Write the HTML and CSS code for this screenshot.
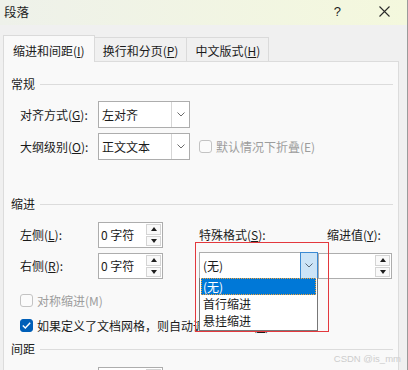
FILE: index.html
```html
<!DOCTYPE html>
<html>
<head>
    <title>段落</title>
    <link rel="stylesheet" href="styles.css">
</head>
<body>
    <div class="dialog">
        <div class="titlebar">
            <span class="title">段落</span>
            <span class="help">?</span>
            <svg class="close" width="11" height="11" viewBox="0 0 11 11">
                <path d="M0.5 0.5 L10.5 10.5 M10.5 0.5 L0.5 10.5" stroke="#2b2b2b" stroke-width="1.1" fill="none"/>
            </svg>
        </div>

        <div class="tabs">
            <div class="tab active">缩进和间距(<u>I</u>)</div>
            <div class="tab">换行和分页(<u>P</u>)</div>
            <div class="tab">中文版式(<u>H</u>)</div>
        </div>

        <div class="panel">
            <!-- 常规 -->
            <div class="group-head"><span>常规</span></div>
            <div class="form-row first">
                <span class="label">对齐方式(<u>G</u>):</span>
                <div class="combo">
                    <span class="value">左对齐</span>
                    <span class="arrow"><svg width="8" height="5" viewBox="0 0 8 5"><path d="M0.5 0.5 L4 4 L7.5 0.5" stroke="#6b6b6b" fill="none"/></svg></span>
                </div>
            </div>
            <div class="form-row">
                <span class="label">大纲级别(<u>O</u>):</span>
                <div class="combo">
                    <span class="value">正文文本</span>
                    <span class="arrow"><svg width="8" height="5" viewBox="0 0 8 5"><path d="M0.5 0.5 L4 4 L7.5 0.5" stroke="#6b6b6b" fill="none"/></svg></span>
                </div>
                <div class="check disabled">
                    <span class="box"></span>
                    <span>默认情况下折叠(E)</span>
                </div>
            </div>

            <!-- 缩进 -->
            <div class="group-head indent-head"><span>缩进</span></div>
            <div class="indent-grid">
                <span class="label">左侧(<u>L</u>):</span>
                <div class="spin">
                    <span class="num">0 字符</span>
                    <span class="btns"><span class="btn up"></span><span class="btn down"></span></span>
                </div>
                <span class="label">特殊格式(<u>S</u>):</span>
                <span class="label value-label">缩进值(<u>Y</u>):</span>

                <span class="label">右侧(<u>R</u>):</span>
                <div class="spin">
                    <span class="num">0 字符</span>
                    <span class="btns"><span class="btn up"></span><span class="btn down"></span></span>
                </div>
                <div class="combo special">
                    <span class="value">(无)</span>
                    <span class="arrow hot"><svg width="8" height="5" viewBox="0 0 8 5"><path d="M0.5 0.5 L4 4 L7.5 0.5" stroke="#5a6a7a" fill="none"/></svg></span>
                    <div class="droplist">
                        <div class="item selected">(无)</div>
                        <div class="item">首行缩进</div>
                        <div class="item">悬挂缩进</div>
                    </div>
                    <div class="mark"></div>
                </div>
                <div class="spin wide">
                    <span class="num"></span>
                    <span class="btns"><span class="btn up"></span><span class="btn down"></span></span>
                </div>
            </div>

            <div class="check-row disabled first">
                <span class="box"></span>
                <span>对称缩进(M)</span>
            </div>
            <div class="check-row">
                <span class="box checked"><svg width="9" height="7" viewBox="0 0 9 7"><path d="M0.8 3.6 L3.3 6 L8.2 0.8" stroke="#fff" stroke-width="1.4" fill="none"/></svg></span>
                <span>如果定义了文档网格，则自动调整右缩进(<u>D</u>)</span>
            </div>

            <!-- 间距 -->
            <div class="group-head space-head"><span>间距</span></div>
            <div class="form-row last">
                <span class="label"></span>
                <div class="spin">
                    <span class="num"></span>
                    <span class="btns"><span class="btn up"></span><span class="btn down"></span></span>
                </div>
            </div>
        </div>

        <div class="watermark">CSDN @is_mm</div>
    </div>
</body>
</html>
```

FILE: styles.css
```css
body {
    margin: 0;
    padding: 0;
    font-family: "Noto Sans CJK SC", "Microsoft YaHei UI", sans-serif;
    font-size: 12px;
    color: #1b1b1b;
    background: #f0f0f0;
}

.dialog {
    position: relative;
    width: 407px;
    height: 370px;
    border-right: 1px solid #9a9a9a;
    overflow: hidden;
    background: #f0f0f0;
}

.titlebar {
    height: 25px;
    box-sizing: border-box;
    display: flex;
    align-items: center;
    padding: 0 0 2px 4px;
    background: linear-gradient(90deg, #eef1ea, #f4f8dd);
    font-size: 12.5px;
    color: #1e1e1e;
}

.titlebar .title {
    flex: 1;
}

.help {
    margin-right: 38px;
    font-family: "Liberation Sans", sans-serif;
    font-size: 13px;
}

.close {
    margin-right: 17px;
}

.tabs {
    display: flex;
    align-items: flex-end;
    height: 26px;
    margin: 10px 0 0 3px;
}

.tab {
    padding: 3px 8px 0;
    line-height: 20px;
    border: 1px solid #dadada;
    border-bottom: none;
    background: #f0f0f0;
    margin-left: -1px;
}

.tab.active {
    position: relative;
    z-index: 1;
    margin-left: 0;
    padding: 5px 9px 1px;
    margin-bottom: -1px;
    background: #f9f9f9;
}

.panel {
    margin-left: 3px;
    width: 396px;
    height: 330px;
    box-sizing: border-box;
    border: 1px solid #dcdcdc;
    background: #f9f9f9;
    padding: 14px 5px 0 7px;
}

.group-head {
    display: flex;
    align-items: center;
    gap: 5px;
    line-height: 16px;
}

.group-head::after {
    content: "";
    flex: 1;
    height: 1px;
    background: #dcdcdc;
}

.indent-head {
    margin-top: 36px;
}

.space-head {
    margin-top: 6px;
}

.form-row {
    display: flex;
    align-items: center;
    padding-left: 9px;
    margin-top: 5px;
}

.form-row.first {
    margin-top: 9px;
}

.form-row.last {
    margin-top: 10px;
    align-items: flex-start;
}

.label {
    width: 78px;
    line-height: 16px;
}

.combo {
    width: 92px;
    height: 27px;
    box-sizing: border-box;
    border: 1px solid #adadad;
    background: #fff;
    display: flex;
}

.combo .value {
    flex: 1;
    padding-left: 3px;
    line-height: 25px;
}

.combo .arrow {
    width: 17px;
    border-left: 1px solid #d6d6d6;
    display: flex;
    align-items: center;
    justify-content: center;
}

.combo .arrow.hot {
    width: 16px;
    background: #cce4f7;
    border: 1px solid #3b8ad3;
    margin: -1px -1px -1px 0;
}

.check {
    margin-left: 9px;
    display: flex;
    align-items: center;
    gap: 4px;
}

.box {
    flex: none;
    width: 13px;
    height: 13px;
    box-sizing: border-box;
    border: 1px solid #c3c3c3;
    border-radius: 3px;
    background: #fbfbfb;
    display: flex;
    align-items: center;
    justify-content: center;
}

.box.checked {
    background: #005fb8;
    border-color: #005fb8;
}

.disabled {
    color: #9d9d9d;
}

/* 缩进网格 */
.indent-grid {
    display: grid;
    grid-template-columns: 78px 101px 119px 74px;
    grid-template-rows: 26px 26px;
    row-gap: 5px;
    margin-top: 10px;
    padding-left: 9px;
    align-items: center;
}

.value-label {
    padding-left: 9px;
}

.spin {
    width: 65px;
    height: 26px;
    box-sizing: border-box;
    border: 1px solid #adadad;
    background: #fff;
    display: flex;
}

.spin.wide {
    width: 74px;
}

.spin .num {
    flex: 1;
    padding-left: 2px;
    line-height: 24px;
}

.spin .btns {
    width: 15px;
    display: flex;
    flex-direction: column;
    gap: 1px;
    padding: 1px 1px 1px 0;
}

.btn {
    flex: 1;
    border: 1px solid #d4d4d4;
    background: #f9f9f9;
    display: flex;
    align-items: center;
    justify-content: center;
}

.btn::before {
    content: "";
    border-left: 3px solid transparent;
    border-right: 3px solid transparent;
}

.btn.up::before {
    border-bottom: 4px solid #1e1e1e;
}

.btn.down::before {
    border-top: 4px solid #1e1e1e;
}

.combo.special {
    position: relative;
    width: 119px;
    height: 27px;
    margin-top: -1px;
    align-self: start;
}

.droplist {
    position: absolute;
    z-index: 2;
    left: -1px;
    top: 100%;
    width: 119px;
    box-sizing: border-box;
    border: 1px solid #777;
    border-top: none;
    background: #fff;
    padding: 0 1px 1px;
}

.item {
    line-height: 17px;
    height: 17px;
    padding-left: 2px;
}

.item.selected {
    background: #0078d7;
    color: #fff;
    outline: 1px dotted #f3a43a;
    outline-offset: -1px;
}

.mark {
    position: absolute;
    z-index: 3;
    top: -11px;
    left: -5px;
    right: -12px;
    bottom: -54px;
    border: 1px solid #e3383d;
    pointer-events: none;
}

.check-row {
    display: flex;
    align-items: center;
    gap: 4px;
    height: 20px;
    padding-left: 9px;
    margin-top: 5px;
}

.check-row.first {
    margin-top: 11px;
}

.watermark {
    position: absolute;
    right: 6px;
    bottom: 6px;
    font-family: "Liberation Sans", sans-serif;
    font-size: 9.5px;
    color: #cdcdcd;
}
```
